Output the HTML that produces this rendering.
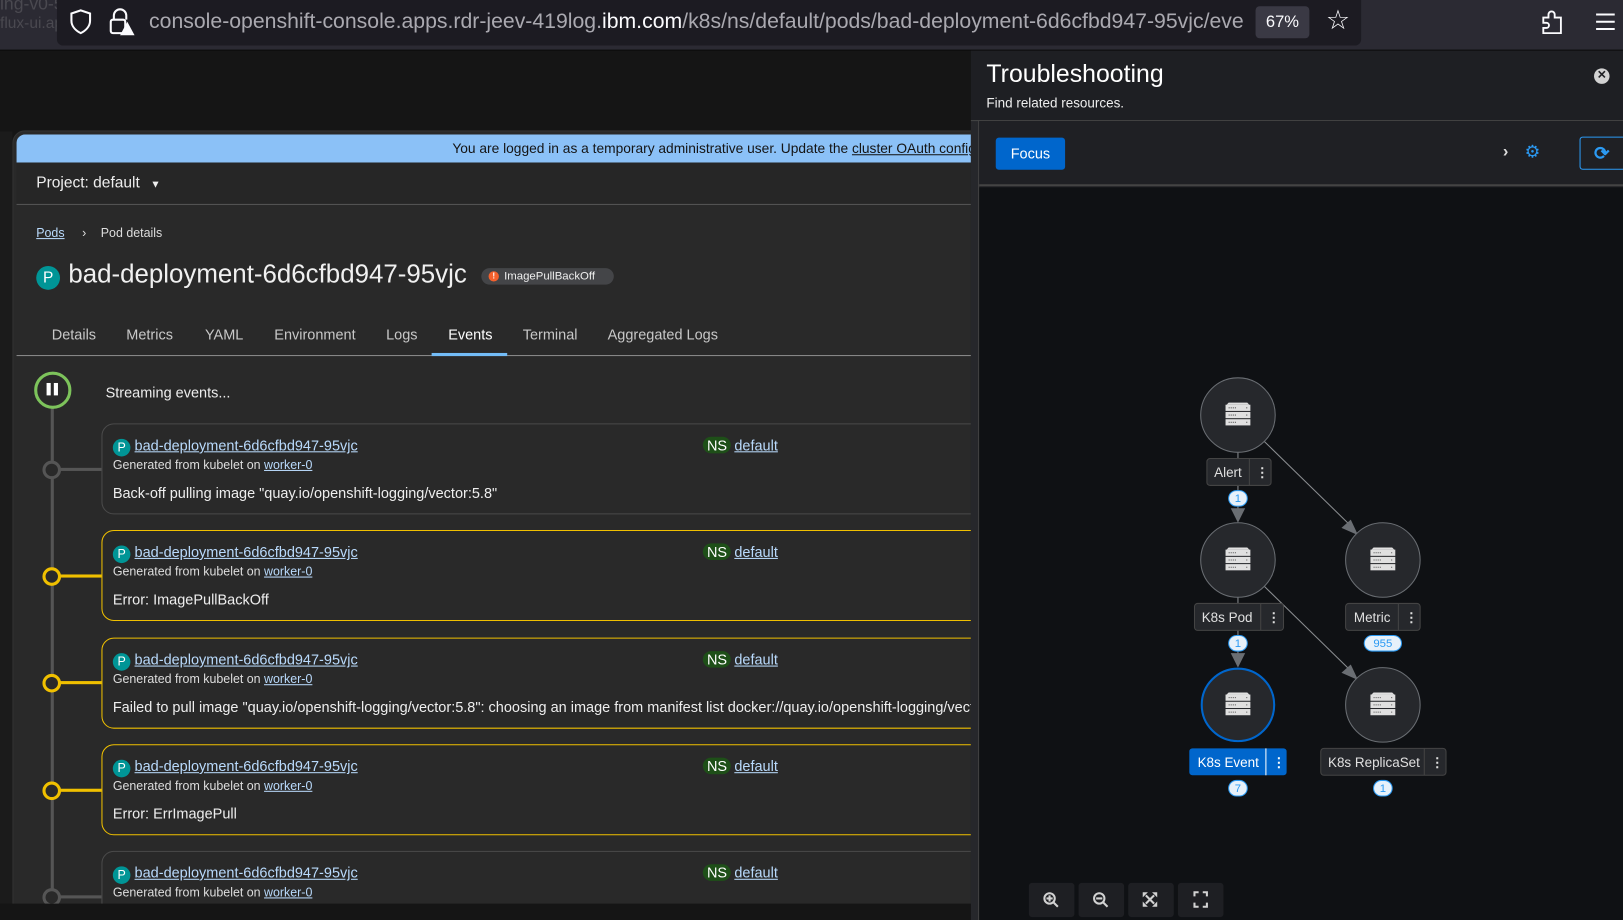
<!DOCTYPE html>
<html><head><meta charset="utf-8"><style>
*{box-sizing:border-box;margin:0;padding:0}
html,body{width:1623px;height:920px;overflow:hidden;background:#151515}
#w{position:absolute;left:0;top:0;width:1568px;height:889px;transform:scale(1.03508);transform-origin:0 0;font-family:"Liberation Sans",sans-serif;color:#e0e0e0;background:#151515;overflow:hidden}
.abs{position:absolute}
a,.lk{color:#b9dafc;text-decoration:underline}
.card{position:absolute;left:98px;width:860px;height:88px;border:1px solid #4a4a4a;border-radius:12px;background:#292929}
.card.y{border-color:#f0c000}
.card .p{position:absolute;left:10px;top:12px;font-size:14px}
.pic{display:inline-block;width:17px;height:17px;border-radius:50%;background:#009596;color:#fff;font-size:12px;text-align:center;line-height:17px;margin-right:4px;vertical-align:-1px}
.card .g{position:absolute;left:10px;top:32px;font-size:12px;color:#ddd}
.card .m{position:absolute;left:10px;top:58px;font-size:14px;color:#eee;white-space:nowrap}
.card .ns{position:absolute;left:580px;top:12px;font-size:14px}
.nsb{display:inline-block;background:#1e4f18;color:#fff;border-radius:9px;padding:0 4px;margin-right:3px}
.dot{position:absolute;left:41px;width:18px;height:18px;border-radius:50%;border:3px solid #f0c000;background:#292929}
.hl{position:absolute;left:58px;width:40px;height:3px;background:#f0c000}
.tab{position:absolute;top:315px;font-size:14px;color:#c8c8c8}
</style></head><body><div id="w">
<div class="abs" style="left:0;top:0;width:1568px;height:48px;background:#2b2a33"></div>
<div class="abs" style="left:0;top:-6px;font-size:17px;color:#4a4950;white-space:nowrap">ing-v0-5-67k4z - Overview | Konflux</div>
<div class="abs" style="left:0;top:14px;font-size:15px;color:#4a4950">flux-ui.apps.stone-prd</div>
<div class="abs" style="left:55px;top:0;width:1260px;height:44px;background:#1c1b22;border-radius:0 0 6px 6px"></div>
<svg class="abs" style="left:66px;top:8px" width="24" height="26" viewBox="0 0 24 26"><path d="M12 2 L21 5 V12 C21 18 16 22 12 24 C8 22 3 18 3 12 V5 Z" fill="none" stroke="#fbfbfe" stroke-width="2"/></svg>
<svg class="abs" style="left:104px;top:7px" width="26" height="28" viewBox="0 0 26 28"><path d="M6 12 V8 a6 6 0 0 1 12 0 V12" fill="none" stroke="#fbfbfe" stroke-width="2"/><rect x="3" y="12" width="14" height="13" rx="2" fill="none" stroke="#fbfbfe" stroke-width="2"/><path d="M19 14 L26 27 H12 Z" fill="#fbfbfe"/></svg>
<div class="abs" style="left:144px;top:9px;font-size:20.5px;color:#aaa9b0;white-space:nowrap;width:1058px;overflow:hidden">console-openshift-console.apps.rdr-jeev-419log.<span style="color:#fbfbfe">ibm.com</span>/k8s/ns/default/pods/bad-deployment-6d6cfbd947-95vjc/events</div>
<div class="abs" style="left:1213px;top:6px;width:52px;height:31px;background:#3a3944;border-radius:4px;color:#fbfbfe;font-size:16px;text-align:center;line-height:31px">67%</div>
<div class="abs" style="left:1281px;top:4px;font-size:26px;color:#fbfbfe">☆</div>
<svg class="abs" style="left:1488px;top:8px" width="24" height="26" viewBox="0 0 24 26"><path d="M3 9 H8 V6 a3 3 0 0 1 6 0 V9 H20 V24 H3 V19 H6 a2.5 2.5 0 0 0 0-5 H3 Z" fill="none" stroke="#fbfbfe" stroke-width="1.8"/></svg>
<svg class="abs" style="left:1541px;top:12px" width="20" height="18"><path d="M1 2H19M1 9H19M1 16H19" stroke="#fbfbfe" stroke-width="2"/></svg>
<div class="abs" style="left:0;top:48px;width:1568px;height:1px;background:#0c0c0d"></div>

<div class="abs" style="left:0;top:127px;width:12px;height:762px;background:#1b1b1b"></div>
<div class="abs" style="left:12px;top:126px;width:940px;height:770px;background:#292929;border-radius:12px 0 0 0;border:1px solid #333"></div>
<div class="abs" style="left:16px;top:130px;width:930px;height:27px;background:#8bc1f7;border-radius:8px 0 0 0;color:#151515;font-size:13.3px;line-height:27px;white-space:nowrap;overflow:hidden;padding-left:421px">You are logged in as a temporary administrative user. Update the <span style="text-decoration:underline">cluster OAuth configuration</span></div>
<div class="abs" style="left:16px;top:157px;width:930px;height:41px;background:#262626;border-bottom:1px solid #555"></div>
<div class="abs" style="left:35px;top:168px;font-size:15px;color:#eee">Project: default <span style="font-size:10px;margin-left:6px">▼</span></div>
<div class="abs" style="left:35px;top:218px;font-size:12px"><span class="lk">Pods</span><span style="color:#ddd;margin:0 14px 0 17px">›</span><span style="color:#ddd">Pod details</span></div>
<div class="abs" style="left:35px;top:257px;width:23px;height:23px;border-radius:50%;background:#009596;color:#fff;font-size:15px;text-align:center;line-height:23px">P</div>
<div class="abs" style="left:66px;top:251px;font-size:25px;color:#f0f0f0">bad-deployment-6d6cfbd947-95vjc</div>
<div class="abs" style="left:465px;top:259px;width:128px;height:16px;border-radius:8px;background:#444548;font-size:11px;color:#eee;line-height:16px;padding-left:22px">ImagePullBackOff</div>
<div class="abs" style="left:472px;top:262px;width:10px;height:10px;border-radius:50%;background:#f4602c;color:#fff;font-size:8px;text-align:center;line-height:10px;font-weight:bold">!</div>
<div class="tab" style="left:50px">Details</div>
<div class="tab" style="left:122px">Metrics</div>
<div class="tab" style="left:198px">YAML</div>
<div class="tab" style="left:265px">Environment</div>
<div class="tab" style="left:373px">Logs</div>
<div class="tab" style="left:433px;color:#fff">Events</div>
<div class="tab" style="left:505px">Terminal</div>
<div class="tab" style="left:587px">Aggregated Logs</div>
<div class="abs" style="left:16px;top:343px;width:930px;height:1px;background:#8a8a8a"></div>
<div class="abs" style="left:417px;top:341px;width:73px;height:3px;background:#73bcf7"></div>

<div class="abs" style="left:49px;top:376px;width:3px;height:513px;background:#555"></div>
<div class="abs" style="left:33px;top:359px;width:36px;height:36px;border-radius:50%;border:3px solid #7dc35b;background:#292929"></div>
<div class="abs" style="left:45px;top:370px;width:4px;height:12px;background:#fff"></div>
<div class="abs" style="left:52px;top:370px;width:4px;height:12px;background:#fff"></div>
<div class="abs" style="left:102px;top:371px;font-size:14px;color:#eee">Streaming events...</div>

<div class="dot" style="top:445px;border-color:#555"></div><div class="hl" style="top:452px;background:#555"></div>
<div class="card" style="top:409px"><div class="p"><span class="pic">P</span><span class="lk">bad-deployment-6d6cfbd947-95vjc</span></div><div class="ns"><span class="nsb">NS</span><span class="lk">default</span></div><div class="g">Generated from kubelet on <span class="lk">worker-0</span></div><div class="m">Back-off pulling image "quay.io/openshift-logging/vector:5.8"</div></div>
<div class="dot" style="top:548px"></div><div class="hl" style="top:555px"></div>
<div class="card y" style="top:512px"><div class="p"><span class="pic">P</span><span class="lk">bad-deployment-6d6cfbd947-95vjc</span></div><div class="ns"><span class="nsb">NS</span><span class="lk">default</span></div><div class="g">Generated from kubelet on <span class="lk">worker-0</span></div><div class="m">Error: ImagePullBackOff</div></div>
<div class="dot" style="top:651px"></div><div class="hl" style="top:658px"></div>
<div class="card y" style="top:616px"><div class="p"><span class="pic">P</span><span class="lk">bad-deployment-6d6cfbd947-95vjc</span></div><div class="ns"><span class="nsb">NS</span><span class="lk">default</span></div><div class="g">Generated from kubelet on <span class="lk">worker-0</span></div><div class="m">Failed to pull image "quay.io/openshift-logging/vector:5.8": choosing an image from manifest list docker://quay.io/openshift-logging/vector:5.8</div></div>
<div class="dot" style="top:755px"></div><div class="hl" style="top:762px"></div>
<div class="card y" style="top:719px"><div class="p"><span class="pic">P</span><span class="lk">bad-deployment-6d6cfbd947-95vjc</span></div><div class="ns"><span class="nsb">NS</span><span class="lk">default</span></div><div class="g">Generated from kubelet on <span class="lk">worker-0</span></div><div class="m">Error: ErrImagePull</div></div>
<div class="dot" style="top:858px;border-color:#555"></div><div class="hl" style="top:865px;background:#555"></div>
<div class="card" style="top:822px"><div class="p"><span class="pic">P</span><span class="lk">bad-deployment-6d6cfbd947-95vjc</span></div><div class="ns"><span class="nsb">NS</span><span class="lk">default</span></div><div class="g">Generated from kubelet on <span class="lk">worker-0</span></div></div>
<div class="abs" style="left:0;top:873px;width:946px;height:16px;background:#151515"></div>

<div class="abs" style="left:938px;top:49px;width:630px;height:840px;background:#1e1f23"></div>
<div class="abs" style="left:938px;top:116px;width:8px;height:773px;background:#26272b;border-right:1px solid #444"></div>
<div class="abs" style="left:953px;top:58px;font-size:24px;color:#fff">Troubleshooting</div>
<div class="abs" style="left:953px;top:92px;font-size:13px;color:#eee">Find related resources.</div>
<div class="abs" style="left:1540px;top:66px;width:15px;height:15px;border-radius:50%;background:#d2d2d2;color:#1e1f23;font-size:11px;text-align:center;line-height:15px;font-weight:bold">✕</div>
<div class="abs" style="left:938px;top:116px;width:630px;height:1px;background:#444"></div>
<div class="abs" style="left:946px;top:117px;width:622px;height:63px;background:#1f2024;border-bottom:2px solid #444"></div>
<div class="abs" style="left:962px;top:133px;width:67px;height:31px;background:#0066cc;border-radius:3px;color:#fff;font-size:14px;text-align:center;line-height:31px">Focus</div>
<div class="abs" style="left:1452px;top:138px;font-size:16px;color:#ddd;font-weight:bold">›</div>
<div class="abs" style="left:1473px;top:137px;font-size:17px;color:#2b9af3">⚙</div>
<div class="abs" style="left:1526px;top:132px;width:50px;height:32px;border:1px solid #2b9af3;border-radius:3px;color:#2b9af3;font-size:18px;line-height:30px;padding-left:13px;font-weight:bold">⟳</div>
<div class="abs" style="left:946px;top:181px;width:622px;height:708px;background:#0f1114"></div>

<svg class="abs" style="left:946px;top:181px" width="622" height="708" viewBox="946 181 622 708" font-family="Liberation Sans, sans-serif">
<defs><g id="srv"><path d="M-11 -10 L-9 -12 H9 L11 -10 Z" fill="#e0e0e0"/><rect x="-12" y="-10" width="24" height="6" fill="#e0e0e0"/><rect x="-12" y="-3" width="24" height="6" fill="#e0e0e0"/><rect x="-12" y="4" width="24" height="6" fill="#e0e0e0"/><path d="M-9 -7H-1M-9 0H-1M-9 7H-1" stroke="#555" stroke-width="1" stroke-dasharray="1 1"/><path d="M8 -7h1M8 0h1M8 7h1" stroke="#555"/></g></defs>
<g stroke="#8a8d90" stroke-width="1"><line x1="1221" y1="426" x2="1305" y2="508"/><line x1="1221" y1="566" x2="1305" y2="648"/><line x1="1196" y1="436" x2="1196" y2="500"/><line x1="1196" y1="576" x2="1196" y2="640"/></g>
<g fill="#6a6e73"><path d="M1296 510 L1312 517 L1305 502Z"/><path d="M1296 650 L1312 657 L1305 642Z"/><path d="M1189 491 L1203 491 L1196 505Z"/><path d="M1189 631 L1203 631 L1196 645Z"/></g>
<g fill="#26282c" stroke="#6a6e73" stroke-width="1"><circle cx="1196" cy="401" r="36"/><circle cx="1196" cy="541" r="36"/><circle cx="1336" cy="541" r="36"/><circle cx="1336" cy="681" r="36"/></g>
<circle cx="1196" cy="681" r="35" fill="#26282c" stroke="#0066cc" stroke-width="2"/>
<use href="#srv" x="1196" y="401"/><use href="#srv" x="1196" y="541"/><use href="#srv" x="1336" y="541"/><use href="#srv" x="1196" y="681"/><use href="#srv" x="1336" y="681"/>
<g font-size="13" fill="#e0e0e0">
<rect x="1166" y="443" width="62" height="26" rx="3" fill="#26282c" stroke="#444"/><line x1="1207" y1="443" x2="1207" y2="469" stroke="#444"/><text x="1173" y="461">Alert</text><text x="1213" y="461" font-weight="bold">⋮</text>
<rect x="1154" y="583" width="86" height="26" rx="3" fill="#26282c" stroke="#444"/><line x1="1218" y1="583" x2="1218" y2="609" stroke="#444"/><text x="1161" y="601">K8s Pod</text><text x="1224" y="601" font-weight="bold">⋮</text>
<rect x="1300" y="583" width="72" height="26" rx="3" fill="#26282c" stroke="#444"/><line x1="1351" y1="583" x2="1351" y2="609" stroke="#444"/><text x="1308" y="601">Metric</text><text x="1357" y="601" font-weight="bold">⋮</text>
<rect x="1149" y="723" width="94" height="26" rx="3" fill="#0066cc"/><line x1="1223" y1="723" x2="1223" y2="749" stroke="#fff"/><text x="1157" y="741" fill="#fff">K8s Event</text><text x="1229" y="741" font-weight="bold" fill="#fff">⋮</text>
<rect x="1276" y="723" width="121" height="26" rx="3" fill="#26282c" stroke="#444"/><line x1="1376" y1="723" x2="1376" y2="749" stroke="#444"/><text x="1283" y="741">K8s ReplicaSet</text><text x="1382" y="741" font-weight="bold">⋮</text>
</g>
<g font-size="11" fill="#2b9af3" text-anchor="middle">
<rect x="1187" y="474" width="18" height="15" rx="7.5" fill="#e7f1fa" stroke="#2b9af3"/><text x="1196" y="485">1</text>
<rect x="1187" y="614" width="18" height="15" rx="7.5" fill="#e7f1fa" stroke="#2b9af3"/><text x="1196" y="625">1</text>
<rect x="1318" y="614" width="36" height="15" rx="7.5" fill="#e7f1fa" stroke="#2b9af3"/><text x="1336" y="625">955</text>
<rect x="1187" y="754" width="18" height="15" rx="7.5" fill="#e7f1fa" stroke="#2b9af3"/><text x="1196" y="765">7</text>
<rect x="1327" y="754" width="18" height="15" rx="7.5" fill="#e7f1fa" stroke="#2b9af3"/><text x="1336" y="765">1</text>
</g>
<g fill="#1e1f23"><rect x="994" y="853" width="44" height="33" rx="3"/><rect x="1042" y="853" width="44" height="33" rx="3"/><rect x="1090" y="853" width="44" height="33" rx="3"/><rect x="1138" y="853" width="44" height="33" rx="3"/></g>
<g stroke="#d2d2d2" stroke-width="2" fill="none"><circle cx="1014" cy="868" r="5"/><path d="M1018 872l4 4M1011 868h6M1014 865v6"/><circle cx="1062" cy="868" r="5"/><path d="M1066 872l4 4M1059 868h6"/><path d="M1107 865l8 8M1115 865l-8 8"/><path d="M1154 866v-4h4M1166 866v-4h-4M1154 872v4h4M1166 872v4h-4"/></g>
<g fill="#d2d2d2"><path d="M1104 862h5l-5 5zM1118 862h-5l5 5zM1104 876h5l-5-5zM1118 876h-5l5-5z"/></g>
</svg>
</div></body></html>
